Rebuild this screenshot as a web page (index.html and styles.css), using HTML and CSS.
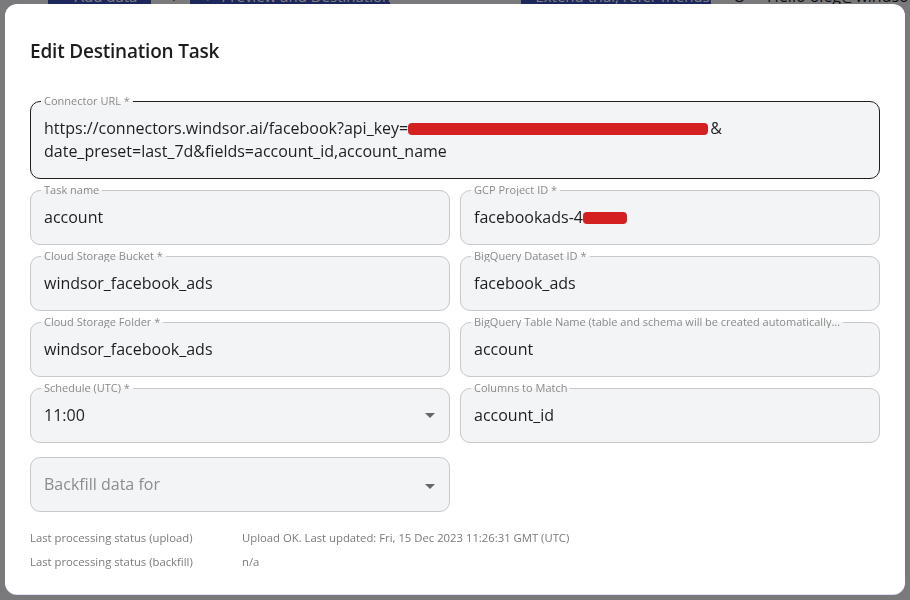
FILE: index.html
```html
<!DOCTYPE html>
<html lang="en">
<head>
<meta charset="utf-8">
<title>Edit Destination Task</title>
<link rel="stylesheet" href="styles.css">
</head>
<body>
<div class="page">
  <header class="topbar">
    <span class="nav-btn nav-add">+ Add data</span>
    <span class="nav-arrow">&rarr;</span>
    <span class="nav-btn nav-preview">✓ Preview and Destination</span>
    <span class="nav-btn nav-trial">Extend trial, refer friends!</span>
    <span class="nav-icon">O</span>
    <span class="nav-hello">Hello oleg@windsor.ai</span>
  </header>
</div>
<div class="backdrop"></div>
<div class="modal">
  <h2 class="modal-title">Edit Destination Task</h2>
  <div class="form">
    <fieldset class="field field-focused">
      <legend>Connector URL *</legend>
      <div class="value value-multi">https://connectors.windsor.ai/facebook?api_key=<span class="redact redact-long"></span>&amp;<br>date_preset=last_7d&amp;fields=account_id,account_name</div>
    </fieldset>
    <div class="grid">
      <fieldset class="field">
        <legend>Task name</legend>
        <div class="value">account</div>
      </fieldset>
      <fieldset class="field">
        <legend>GCP Project ID *</legend>
        <div class="value">facebookads-4<span class="redact redact-short"></span></div>
      </fieldset>
      <fieldset class="field">
        <legend>Cloud Storage Bucket *</legend>
        <div class="value">windsor_facebook_ads</div>
      </fieldset>
      <fieldset class="field">
        <legend>BigQuery Dataset ID *</legend>
        <div class="value">facebook_ads</div>
      </fieldset>
      <fieldset class="field">
        <legend>Cloud Storage Folder *</legend>
        <div class="value">windsor_facebook_ads</div>
      </fieldset>
      <fieldset class="field">
        <legend>BigQuery Table Name (table and schema will be created automatically…</legend>
        <div class="value">account</div>
      </fieldset>
      <fieldset class="field">
        <legend>Schedule (UTC) *</legend>
        <div class="value value-select">11:00<span class="caret"></span></div>
      </fieldset>
      <fieldset class="field">
        <legend>Columns to Match</legend>
        <div class="value">account_id</div>
      </fieldset>
    </div>
    <div class="grid grid-backfill">
      <div class="field field-plain">
        <div class="value value-select placeholder">Backfill data for<span class="caret"></span></div>
      </div>
    </div>
    <div class="status">
      <div class="status-row"><span class="status-label">Last processing status (upload)</span><span>Upload OK. Last updated: Fri, 15 Dec 2023 11:26:31 GMT (UTC)</span></div>
      <div class="status-row"><span class="status-label">Last processing status (backfill)</span><span>n/a</span></div>
    </div>
  </div>
</div>
</body>
</html>
```
FILE: styles.css
```css
html, body {
  margin: 0;
  padding: 0;
  height: 100%;
  overflow: hidden;
}
body {
  font-family: "Open Sans", "Liberation Sans", sans-serif;
  background: #f4f5f9;
}
.page {
  height: 100%;
}
.topbar {
  display: flex;
  align-items: center;
  height: 24px;
  margin-top: -16px;
  padding-left: 48px;
  font-size: 15px;
  color: #fff;
}
.nav-btn {
  background: #3c4fb8;
  padding: 2px 14px;
  white-space: nowrap;
}
.nav-add { width: 77px; }
.nav-arrow { color: #222; margin: 0 12px; }
.nav-preview { width: 172px; }
.nav-trial { margin-left: 131px; width: 162px; }
.nav-icon { color: #222; margin-left: 22px; }
.nav-hello { color: #222; margin-left: 22px; font-size: 16px; white-space: nowrap; }

.backdrop {
  position: fixed;
  inset: 0;
  background: rgba(0, 0, 0, 0.5);
}
.modal {
  position: fixed;
  left: 5px;
  top: 4px;
  width: 900px;
  height: 590px;
  box-sizing: border-box;
  background: #fff;
  border-radius: 12px;
  box-shadow: 0 1px 0 #dfe2f4;
  padding: 34px 25px 0 25px;
}
.modal-title {
  margin: 0;
  font-size: 19px;
  line-height: 26px;
  font-weight: 600;
  color: #1c1c1c;
  letter-spacing: -0.2px;
}
.form {
  margin-top: 31px;
  display: flex;
  flex-direction: column;
  gap: 5px;
}
.grid {
  display: grid;
  grid-template-columns: 1fr 1fr;
  column-gap: 10px;
  row-gap: 5px;
}
.grid-backfill {
  margin-top: 9px;
}
.field {
  margin: 0;
  padding: 0;
  min-width: 0;
  border: 1px solid #c9c9cc;
  border-radius: 10px;
  background: #f3f4f6;
}
.field-focused {
  border-color: #1e1e1e;
}
.field legend {
  margin-left: 10px;
  padding: 0 3px;
  font-size: 11px;
  line-height: 12px;
  color: #8a8a8a;
  white-space: nowrap;
  overflow: hidden;
  max-width: 396px;
}
.value {
  padding: 11px 13px 17px 13px;
  font-size: 16px;
  line-height: 20px;
  color: #1e1e1e;
  white-space: nowrap;
}
.value-multi {
  padding-top: 10px;
  padding-bottom: 15px;
  line-height: 23px;
}
.value-select {
  display: flex;
  align-items: center;
  justify-content: space-between;
}
.field-plain .value {
  padding: 16px 13px 17px 13px;
}
.placeholder {
  color: #8c8c8c;
}
.caret {
  width: 0;
  height: 0;
  border-left: 5px solid transparent;
  border-right: 5px solid transparent;
  border-top: 5px solid #666;
  margin-right: 1px;
}
.field-plain .caret {
  margin-top: 4px;
}
.redact {
  display: inline-block;
  height: 12px;
  background: #d42020;
  border-radius: 4px;
  vertical-align: -1px;
}
.redact-long {
  width: 300px;
  margin-right: 2px;
}
.redact-short {
  width: 44px;
}
.status {
  margin-top: 13px;
  display: flex;
  flex-direction: column;
  gap: 8px;
  font-size: 11.3px;
  line-height: 16px;
  color: #7a7a7a;
}
.status-row {
  display: flex;
}
.status-label {
  width: 212px;
}
```
